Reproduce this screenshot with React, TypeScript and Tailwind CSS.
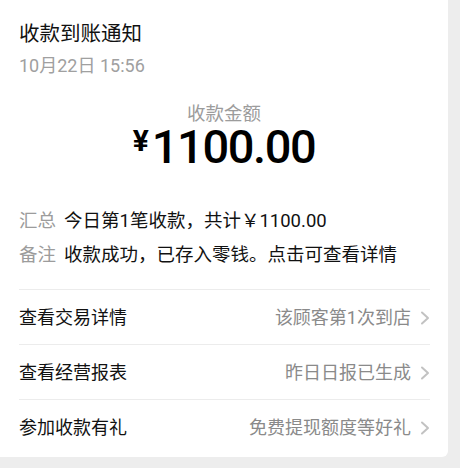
const links = [
  { label: "查看交易详情", hint: "该顾客第1次到店" },
  { label: "查看经营报表", hint: "昨日日报已生成" },
  { label: "参加收款有礼", hint: "免费提现额度等好礼" },
];

const Chevron = () => (
  <svg width="10" height="14" viewBox="0 0 10 14" fill="none" className="shrink-0">
    <polyline points="2,1.5 8,7 2,12.5" stroke="#c2c2c2" strokeWidth="2" strokeLinecap="round" strokeLinejoin="round" />
  </svg>
);

export default function App() {
  return (
    <div
      className="h-[468px] w-[460px] bg-[#ededed] pb-[11px] pr-3"
      style={{ fontFamily: 'Roboto, "Noto Sans CJK SC", sans-serif' }}
    >
      <div className="flex h-full flex-col rounded-br-md bg-white px-[19px]">
        {/* Header */}
        <div className="pt-[19px]">
          <h1 className="text-[20.5px] leading-[30px] text-[#111]">收款到账通知</h1>
          <p className="mt-[5px] text-[18px] leading-[24px] text-[#a0a0a0]">10月22日 15:56</p>
        </div>

        {/* Amount */}
        <div className="mt-[25px] flex flex-col items-center">
          <p className="text-[18.5px] leading-[22px] text-[#9c9c9c]">收款金额</p>
          <div className="flex items-start text-black">
            <span className="mt-[1px] mr-[3px] text-[30px] font-bold leading-[30px]">¥</span>
            <span className="text-[47px] font-medium leading-[44px] tracking-[-1.4px]">1100.00</span>
          </div>
        </div>

        {/* Summary */}
        <div className="mt-[40px] space-y-[10px] text-[18.5px] leading-[24px]">
          <div className="flex gap-[8px]">
            <span className="text-[#9c9c9c]">汇总</span>
            <span className="text-[#111]">今日第1笔收款，共计￥1100.00</span>
          </div>
          <div className="flex gap-[8px]">
            <span className="text-[#9c9c9c]">备注</span>
            <span className="text-[#111]">收款成功，已存入零钱。点击可查看详情</span>
          </div>
        </div>

        {/* Links */}
        <ul className="mt-[22px] mr-[-1px]">
          {links.map((l) => (
            <li
              key={l.label}
              className="flex h-[55px] items-center justify-between border-t border-[#ececec] pt-[1px]"
            >
              <span className="text-[18px] text-[#111]">{l.label}</span>
              <span className="flex items-center gap-[9px] text-[18px] text-[#8a8a8a]">
                {l.hint}
                <Chevron />
              </span>
            </li>
          ))}
        </ul>
      </div>
    </div>
  );
}
